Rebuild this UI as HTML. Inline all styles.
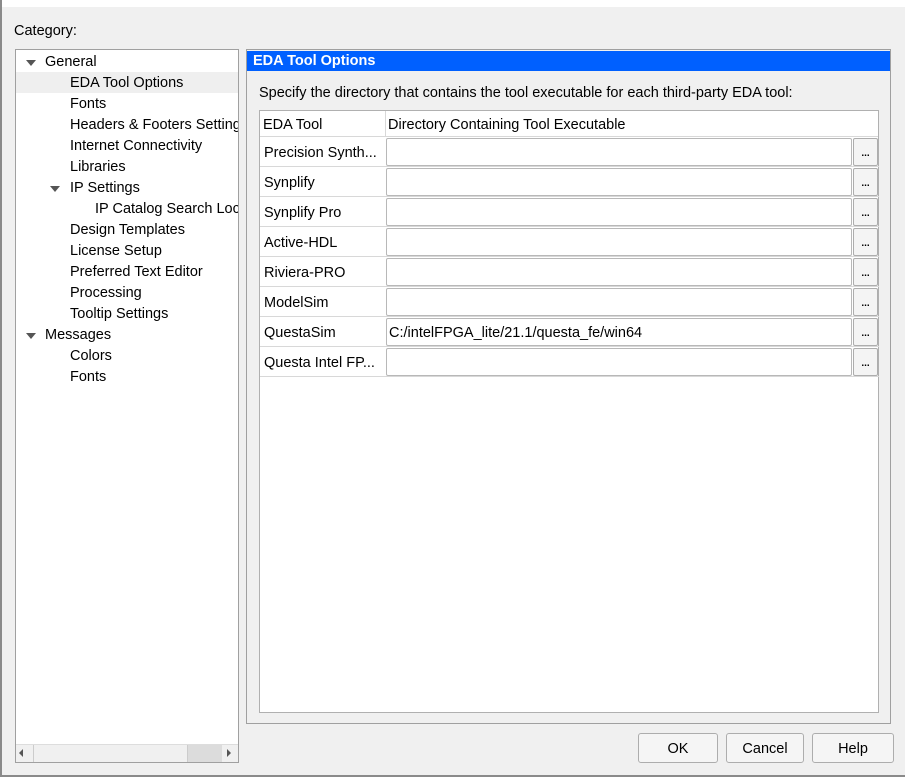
<!DOCTYPE html>
<html><head><style>
*{box-sizing:border-box;margin:0;padding:0}
body{width:905px;height:777px;background:#f0f0f0;font-family:"Liberation Sans",sans-serif;font-size:14.5px;color:#000;position:relative;overflow:hidden}
.a{position:absolute;white-space:nowrap}
.tree div{position:absolute;left:0;height:21px;line-height:23px;width:222px;overflow:hidden}
.tri{position:absolute;width:0;height:0;border-left:5px solid transparent;border-right:5px solid transparent;border-top:6px solid #555}
.row{position:absolute;left:0;width:619px;height:30px;border-bottom:1px solid #d8d8d8}
.row .n{position:absolute;left:4px;top:1px;line-height:30px;width:120px;overflow:hidden}
.row .f{position:absolute;left:126px;top:1px;width:466px;height:28px;background:#fff;border:1px solid #b8b8b8;border-radius:2px;line-height:28px;padding-left:2px}
.row .b{position:absolute;left:593px;top:1px;width:25px;height:28px;background:#f4f4f4;border:1px solid #adadad;border-radius:2px;font-size:10px;font-weight:bold;text-align:center;line-height:30px}
.btn{position:absolute;top:733px;height:30px;border:1px solid #adadad;border-radius:3px;background:#f5f5f5;text-align:center;line-height:31px}
</style></head><body>
<div class="a" style="left:0;top:0;width:905px;height:7px;background:#fff"></div>
<div class="a" style="left:0;top:0;width:2px;height:777px;background:#8a8a8a"></div>
<div class="a" style="left:0;top:775px;width:905px;height:2px;background:#8a8a8a"></div>
<div class="a" style="left:14px;top:23px">Category:</div>
<div class="a tree" style="left:15px;top:49px;width:224px;height:714px;background:#fff;border:1px solid #a0a0a0;overflow:hidden">
<div style="top:1px"><span class="tri" style="left:10px;top:9px"></span><span style="position:absolute;left:29px">General</span></div>
<div style="top:22px;background:#efefef"><span style="position:absolute;left:54px">EDA Tool Options</span></div>
<div style="top:43px"><span style="position:absolute;left:54px">Fonts</span></div>
<div style="top:64px"><span style="position:absolute;left:54px">Headers &amp; Footers Settings</span></div>
<div style="top:85px"><span style="position:absolute;left:54px">Internet Connectivity</span></div>
<div style="top:106px"><span style="position:absolute;left:54px">Libraries</span></div>
<div style="top:127px"><span class="tri" style="left:34px;top:9px"></span><span style="position:absolute;left:54px">IP Settings</span></div>
<div style="top:148px"><span style="position:absolute;left:79px">IP Catalog Search Locations</span></div>
<div style="top:169px"><span style="position:absolute;left:54px">Design Templates</span></div>
<div style="top:190px"><span style="position:absolute;left:54px">License Setup</span></div>
<div style="top:211px"><span style="position:absolute;left:54px">Preferred Text Editor</span></div>
<div style="top:232px"><span style="position:absolute;left:54px">Processing</span></div>
<div style="top:253px"><span style="position:absolute;left:54px">Tooltip Settings</span></div>
<div style="top:274px"><span class="tri" style="left:10px;top:9px"></span><span style="position:absolute;left:29px">Messages</span></div>
<div style="top:295px"><span style="position:absolute;left:54px">Colors</span></div>
<div style="top:316px"><span style="position:absolute;left:54px">Fonts</span></div>
<div style="top:694px;height:18px;background:#f0f0f0;border-top:1px solid #ddd">
<span style="position:absolute;left:3px;top:4px;border-right:4px solid #555;border-top:4px solid transparent;border-bottom:4px solid transparent"></span>
<span style="position:absolute;left:17px;top:0;width:1px;height:18px;background:#ccc"></span>
<span style="position:absolute;left:171px;top:0;width:35px;height:18px;background:#dcdcdc;border-left:1px solid #ccc"></span>
<span style="position:absolute;left:211px;top:4px;border-left:4px solid #555;border-top:4px solid transparent;border-bottom:4px solid transparent"></span>
</div>
</div>
<div class="a" style="left:246px;top:49px;width:645px;height:675px;border:1px solid #a0a0a0"></div>
<div class="a" style="left:247px;top:51px;width:643px;height:20px;background:#0060ff;color:#fff;font-weight:bold;line-height:21px;padding-left:6px">EDA Tool Options</div>
<div class="a" style="left:259px;top:85px">Specify the directory that contains the tool executable for each third-party EDA tool:</div>
<div class="a" style="left:259px;top:110px;width:620px;height:603px;background:#fff;border:1px solid #b0b0b0">
<div style="position:absolute;left:0;top:0;width:618px;height:26px;border-bottom:1px solid #d8d8d8;line-height:28px">
<span style="position:absolute;left:3px">EDA Tool</span>
<span style="position:absolute;left:125px;top:0;width:1px;height:26px;background:#d8d8d8"></span>
<span style="position:absolute;left:128px">Directory Containing Tool Executable</span></div>
<div class="row" style="top:26px"><span class="n">Precision Synth...</span><span class="f"></span><span class="b">...</span></div>
<div class="row" style="top:56px"><span class="n">Synplify</span><span class="f"></span><span class="b">...</span></div>
<div class="row" style="top:86px"><span class="n">Synplify Pro</span><span class="f"></span><span class="b">...</span></div>
<div class="row" style="top:116px"><span class="n">Active-HDL</span><span class="f"></span><span class="b">...</span></div>
<div class="row" style="top:146px"><span class="n">Riviera-PRO</span><span class="f"></span><span class="b">...</span></div>
<div class="row" style="top:176px"><span class="n">ModelSim</span><span class="f"></span><span class="b">...</span></div>
<div class="row" style="top:206px"><span class="n">QuestaSim</span><span class="f">C:/intelFPGA_lite/21.1/questa_fe/win64</span><span class="b">...</span></div>
<div class="row" style="top:236px"><span class="n">Questa Intel FP...</span><span class="f"></span><span class="b">...</span></div>
</div>
<div class="btn" style="left:638px;width:80px">OK</div>
<div class="btn" style="left:726px;width:78px">Cancel</div>
<div class="btn" style="left:812px;width:82px">Help</div>
</body></html>
